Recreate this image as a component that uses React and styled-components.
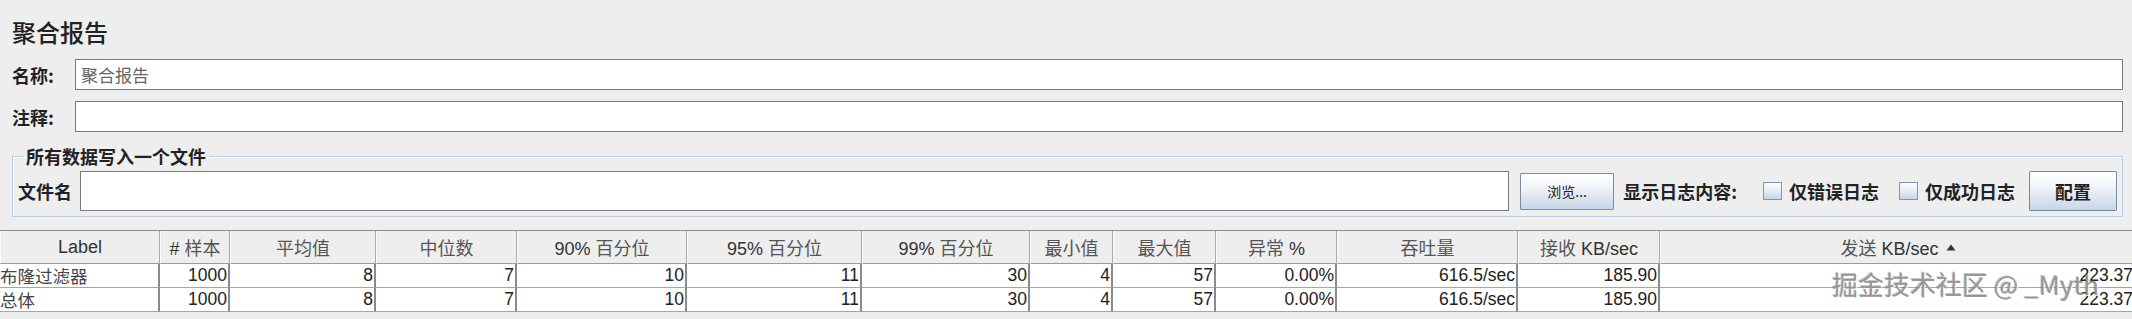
import React from "react";
import styled, { createGlobalStyle } from "styled-components";

const GlobalStyle = createGlobalStyle`
  body {
    margin: 0;
    background: #eeeeee;
    overflow: hidden;
    font-family: "Liberation Sans", "Noto Sans CJK SC", sans-serif;
    color: #222;
  }
`;

const cjk = `"Noto Sans CJK SC", "Liberation Sans", sans-serif`;

const Page = styled.div`
  position: relative;
  width: 2132px;
  height: 319px;
  overflow: hidden;
`;

const Title = styled.h1`
  margin: 0;
  padding: 19px 12px 0;
  font-family: ${cjk};
  font-size: 24px;
  line-height: 26px;
  font-weight: 500;
  color: #222;
`;

const FieldRow = styled.div`
  display: flex;
  align-items: center;
  height: 31px;
  padding: 0 9px 0 12px;
  margin-top: ${(p) => p.$top}px;
`;

const Label = styled.span`
  flex: none;
  width: ${(p) => p.$w}px;
  font-family: ${cjk};
  font-size: 18px;
  font-weight: 700;
  color: #222;
  white-space: nowrap;
`;

const TextBox = styled.div`
  flex: 1;
  align-self: stretch;
  display: flex;
  align-items: center;
  background: #fff;
  border: 1px solid #7a7a7a;
  padding-left: 5px;
  font-family: ${cjk};
  font-size: 17px;
  color: #666;
`;

const Group = styled.fieldset`
  margin: 15px 9px 0 12px;
  padding: 6px 5px 5px 5px;
  border: 1px solid #b9cde2;
  box-shadow: inset 1px 1px 0 #fff;
`;

const Legend = styled.legend`
  margin-left: 6px;
  padding: 0 3px 0 2px;
  font-family: ${cjk};
  font-size: 18px;
  line-height: 18px;
  font-weight: 700;
  color: #222;
`;

const FileRow = styled.div`
  display: flex;
  align-items: center;
  height: 40px;
`;

const FileBox = styled(TextBox)`
  margin-right: 11px;
`;

const Button = styled.button`
  flex: none;
  width: ${(p) => p.$w}px;
  height: ${(p) => p.$h}px;
  margin-left: ${(p) => p.$ml || 0}px;
  padding: 0;
  border: 1px solid #7a8ca0;
  border-radius: 1px;
  background: linear-gradient(to bottom, #ffffff 0%, #f2f6fa 35%, #c6d6e8 100%);
  font-family: ${cjk};
  font-size: ${(p) => (p.$bold ? 18 : 14)}px;
  font-weight: ${(p) => (p.$bold ? 700 : 400)};
  color: #222;
`;

const Caption = styled.span`
  flex: none;
  margin-left: ${(p) => p.$ml}px;
  font-family: ${cjk};
  font-size: 18px;
  font-weight: 700;
  color: #222;
  white-space: nowrap;
`;

const Check = styled.span`
  flex: none;
  width: 17px;
  height: 16px;
  margin-left: ${(p) => p.$ml}px;
  border: 1px solid #8196ab;
  background: linear-gradient(to bottom, #fbfdff 0%, #e8eff6 45%, #c5d5e6 100%);
`;

const TableWrap = styled.div`
  margin-top: 13px;
  width: 2136px;
  border-top: 1px solid #8c8c8c;
`;

const Grid = styled.div`
  display: grid;
  grid-template-columns: ${(p) => p.$cols};
`;

const HeadCell = styled.div`
  height: 32px;
  display: flex;
  align-items: center;
  justify-content: center;
  gap: 7px;
  background: #eeeeee;
  border-right: 1px solid #a9a9a9;
  border-left: 1px solid #fafafa;
  border-bottom: 1px solid #9a9a9a;
  font-size: 18px;
  color: #333;
  white-space: nowrap;

  & > div > span {
    font-family: ${cjk};
    color: #555;
  }
`;

const Cell = styled.div`
  height: 23px;
  display: flex;
  align-items: center;
  justify-content: ${(p) => (p.$left ? "flex-start" : "flex-end")};
  padding: 0 ${(p) => (p.$left ? 0 : 1)}px 0 0;
  background: #fff;
  border-right: 2px solid #8a8a8a;
  border-bottom: 1px solid #a6a6a6;
  font-family: ${(p) => (p.$left ? cjk : `"Liberation Sans", sans-serif`)};
  font-size: 17.5px;
  color: ${(p) => (p.$left ? "#444" : "#222")};
  white-space: nowrap;
  overflow: hidden;
`;

const Watermark = styled.div`
  position: absolute;
  left: 1832px;
  top: 268px;
  font-family: ${cjk};
  font-size: 26px;
  line-height: 32px;
  color: rgba(140, 140, 140, 0.9);
  text-shadow: 1px 1px 0 rgba(255, 255, 255, 0.9), -1px -1px 0 rgba(90, 90, 90, 0.35);
  white-space: nowrap;
  pointer-events: none;
`;

const columns = [
  { h: "Label", w: 160 },
  { h: "# ", c: "样本", w: 70 },
  { c: "平均值", w: 146 },
  { c: "中位数", w: 141 },
  { h: "90% ", c: "百分位", w: 170 },
  { h: "95% ", c: "百分位", w: 175 },
  { h: "99% ", c: "百分位", w: 168 },
  { c: "最小值", w: 83 },
  { c: "最大值", w: 103 },
  { c: "异常", h2: " %", w: 121 },
  { c: "吞吐量", w: 181 },
  { c: "接收", h2: " KB/sec", w: 142 },
  { c: "发送", h2: " KB/sec", w: 476, sorted: true },
];

const stats = ["1000", "8", "7", "10", "11", "30", "4", "57", "0.00%", "616.5/sec", "185.90", "223.37"];
const rows = [["布隆过滤器", ...stats], ["总体", ...stats]];

const SortUp = () => (
  <svg width="10" height="7" viewBox="0 0 10 7">
    <path d="M5 0.5 L9.5 6.5 L0.5 6.5 Z" fill="#333" />
  </svg>
);

const App = () => {
  const cols = columns.map((c) => `${c.w}px`).join(" ");
  return (
    <Page>
      <GlobalStyle />
      <Title>聚合报告</Title>
      <FieldRow $top={14}>
        <Label $w={63}>名称:</Label>
        <TextBox>聚合报告</TextBox>
      </FieldRow>
      <FieldRow $top={11}>
        <Label $w={63}>注释:</Label>
        <TextBox />
      </FieldRow>
      <Group>
        <Legend>所有数据写入一个文件</Legend>
        <FileRow>
          <Label $w={62}>文件名</Label>
          <FileBox />
          <Button $w={94} $h={37}>浏览...</Button>
          <Caption $ml={9}>显示日志内容:</Caption>
          <Check $ml={26} />
          <Caption $ml={7}>仅错误日志</Caption>
          <Check $ml={20} />
          <Caption $ml={7}>仅成功日志</Caption>
          <Button $w={88} $h={40} $ml={14} $bold>配置</Button>
        </FileRow>
      </Group>
      <TableWrap>
        <Grid $cols={cols}>
          {columns.map((c, i) => (
            <HeadCell key={i}>
              <div>
                {c.h}
                {c.c && <span>{c.c}</span>}
                {c.h2}
              </div>
              {c.sorted && <SortUp />}
            </HeadCell>
          ))}
          {rows.map((r, ri) =>
            r.map((v, ci) => (
              <Cell key={`${ri}-${ci}`} $left={ci === 0}>
                {v}
              </Cell>
            ))
          )}
        </Grid>
      </TableWrap>
      <Watermark>掘金技术社区 @ _Myth</Watermark>
    </Page>
  );
};

export default App;
